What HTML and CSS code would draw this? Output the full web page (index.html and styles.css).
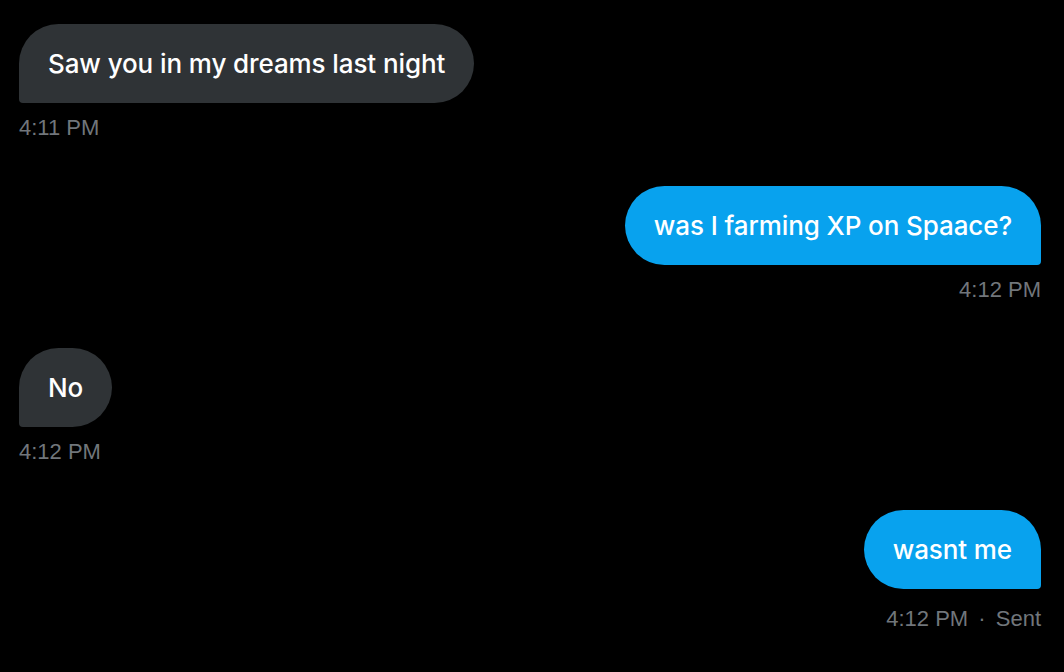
FILE: index.html
```html
<!DOCTYPE html>
<html lang="en">
<head>
    <meta charset="UTF-8">
    <meta name="viewport" content="width=device-width, initial-scale=1.0">
    <title>Messages</title>
    <link rel="stylesheet" href="styles.css">
</head>
<body>
    <main class="thread">
        <!-- received -->
        <div class="message received">
            <div class="bubble">Saw you in my dreams last night</div>
            <div class="meta">4:11 PM</div>
        </div>

        <!-- sent -->
        <div class="message sent">
            <div class="bubble">was I farming XP on Spaace?</div>
            <div class="meta">4:12 PM</div>
        </div>

        <div class="message received">
            <div class="bubble">No</div>
            <div class="meta">4:12 PM</div>
        </div>

        <div class="message sent last">
            <div class="bubble">wasnt me</div>
            <div class="meta">4:12 PM <span class="dot">·</span> Sent</div>
        </div>
    </main>
</body>
</html>
```

FILE: styles.css
```css
* {
    margin: 0;
    padding: 0;
    box-sizing: border-box;
}

:root {
    --bg: #000000;
    --bubble-in: #2f3336;
    --bubble-out: #08a2ee;
    --meta: #71767b;
}

body {
    background: var(--bg);
    color: #ffffff;
    font-family: Inter, "Noto Sans", sans-serif;
}

.thread {
    display: flex;
    flex-direction: column;
    gap: 46px;
    padding: 24px 23px 0 19px;
}

.message {
    display: flex;
    flex-direction: column;
}

.message.received {
    align-items: flex-start;
}

.message.sent {
    align-items: flex-end;
}

.bubble {
    height: 79px;
    line-height: 79px;
    padding: 0 29px;
    font-size: 26px;
    font-weight: 500;
    letter-spacing: -0.1px;
    white-space: nowrap;
    border-radius: 40px;
}

.received .bubble {
    background: var(--bubble-in);
    border-bottom-left-radius: 4px;
}

.sent .bubble {
    background: var(--bubble-out);
    border-bottom-right-radius: 4px;
}

.meta {
    margin-top: 13px;
    font-family: "Liberation Sans", Arial, sans-serif;
    font-size: 22px;
    line-height: 24px;
    color: var(--meta);
}

.last .meta {
    margin-top: 18px;
}

.dot {
    margin: 0 4px;
}
```
